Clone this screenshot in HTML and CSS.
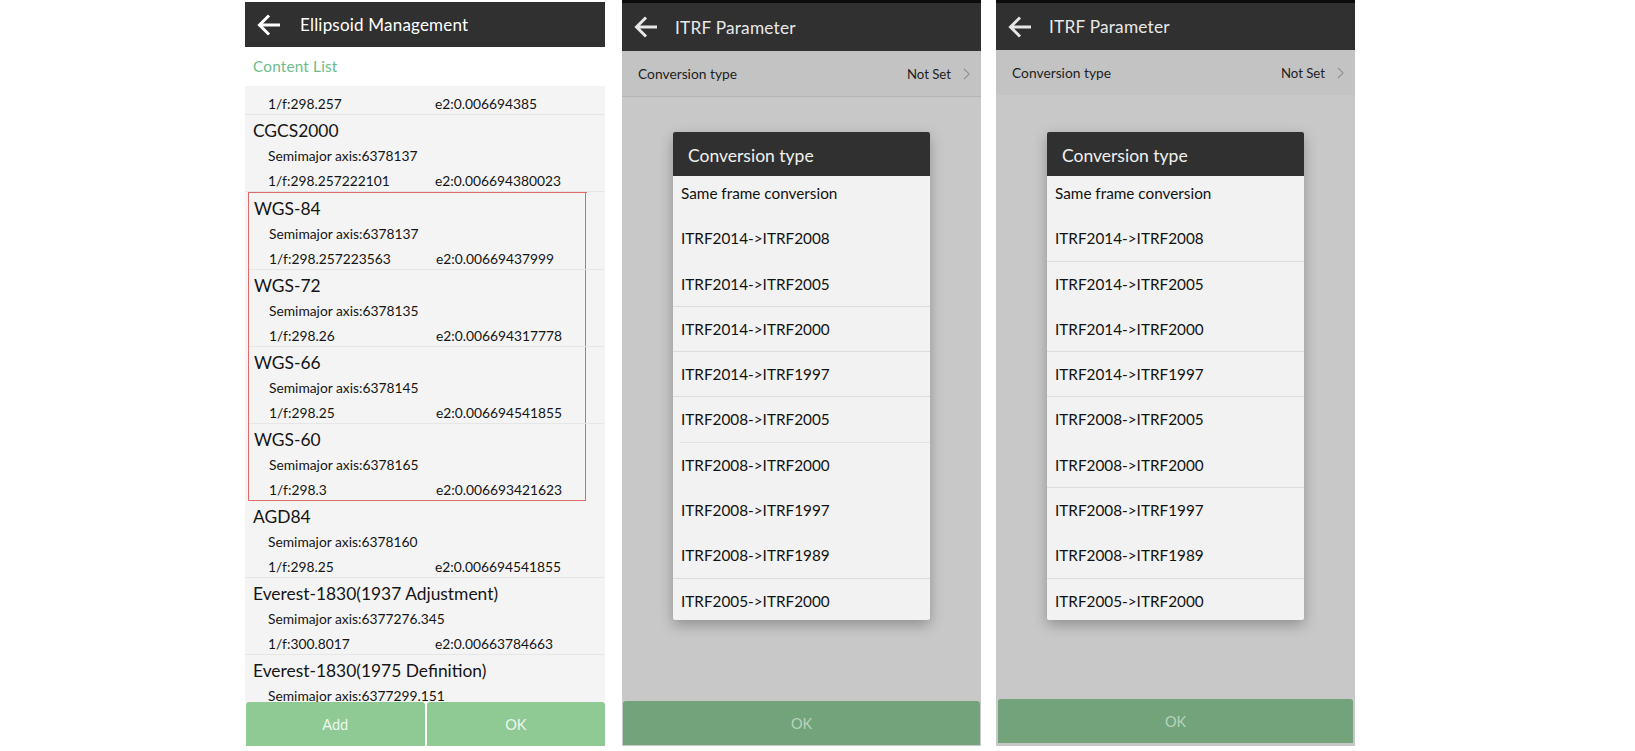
FILE: index.html
```html
<!DOCTYPE html>
<html lang="en">

<head>
    <meta charset="UTF-8">
    <meta name="viewport" content="width=device-width, initial-scale=1.0">
    <title>Ellipsoid / ITRF</title>
    <link rel="stylesheet" href="styles.css">
</head>

<body>
    <div class="screens">

        <!-- screen 1 : ellipsoid list -->
        <div class="phone phone-list">
            <div class="bar">
                <svg class="back" viewBox="0 0 26 24"><path d="M24 12H4M13 2.5L3.5 12l9.5 9.5" /></svg>
                <span class="bar-title">Ellipsoid Management</span>
            </div>
            <div class="label">Content List</div>
            <div class="list">
                <ul class="list-inner">
                    <li class="ell">
                        <div class="ell-name">Krassovsky</div>
                        <div class="ell-row">Semimajor axis:6378245</div>
                        <div class="ell-row"><span class="col">1/f:298.257</span><span>e2:0.006694385</span></div>
                    </li>
                    <li class="ell">
                        <div class="ell-name">CGCS2000</div>
                        <div class="ell-row">Semimajor axis:6378137</div>
                        <div class="ell-row"><span class="col">1/f:298.257222101</span><span>e2:0.006694380023</span></div>
                    </li>
                    <li class="marked">
                        <div class="ell">
                            <div class="ell-name">WGS-84</div>
                            <div class="ell-row">Semimajor axis:6378137</div>
                            <div class="ell-row"><span class="col">1/f:298.257223563</span><span>e2:0.00669437999</span></div>
                        </div>
                        <div class="ell">
                            <div class="ell-name">WGS-72</div>
                            <div class="ell-row">Semimajor axis:6378135</div>
                            <div class="ell-row"><span class="col">1/f:298.26</span><span>e2:0.006694317778</span></div>
                        </div>
                        <div class="ell">
                            <div class="ell-name">WGS-66</div>
                            <div class="ell-row">Semimajor axis:6378145</div>
                            <div class="ell-row"><span class="col">1/f:298.25</span><span>e2:0.006694541855</span></div>
                        </div>
                        <div class="ell">
                            <div class="ell-name">WGS-60</div>
                            <div class="ell-row">Semimajor axis:6378165</div>
                            <div class="ell-row"><span class="col">1/f:298.3</span><span>e2:0.006693421623</span></div>
                        </div>
                    </li>
                    <li class="ell">
                        <div class="ell-name">AGD84</div>
                        <div class="ell-row">Semimajor axis:6378160</div>
                        <div class="ell-row"><span class="col">1/f:298.25</span><span>e2:0.006694541855</span></div>
                    </li>
                    <li class="ell">
                        <div class="ell-name">Everest-1830(1937 Adjustment)</div>
                        <div class="ell-row">Semimajor axis:6377276.345</div>
                        <div class="ell-row"><span class="col">1/f:300.8017</span><span>e2:0.00663784663</span></div>
                    </li>
                    <li class="ell">
                        <div class="ell-name">Everest-1830(1975 Definition)</div>
                        <div class="ell-row">Semimajor axis:6377299.151</div>
                    </li>
                </ul>
            </div>
            <div class="buttons">
                <div class="btn">Add</div>
                <div class="btn">OK</div>
            </div>
        </div>

        <!-- screen 2 : itrf dialog -->
        <div class="phone phone-dim">
            <div class="bar bar-tall">
                <svg class="back" viewBox="0 0 26 24"><path d="M24 12H4M13 2.5L3.5 12l9.5 9.5" /></svg>
                <span class="bar-title">ITRF Parameter</span>
            </div>
            <div class="setting">
                <span>Conversion type</span>
                <span class="value">Not Set <svg class="chev" viewBox="0 0 8 14"><path d="M1 1l6 6-6 6" /></svg></span>
            </div>
            <div class="dim-body">
                <div class="dialog">
                    <div class="dialog-head">Conversion type</div>
                    <div class="dialog-list">
                        <ul class="options">
                            <li>Same frame conversion</li>
                            <li>ITRF2014-&gt;ITRF2008</li>
                            <li class="sep">ITRF2014-&gt;ITRF2005</li>
                            <li class="sep">ITRF2014-&gt;ITRF2000</li>
                            <li class="sep">ITRF2014-&gt;ITRF1997</li>
                            <li class="sep-inset">ITRF2008-&gt;ITRF2005</li>
                            <li>ITRF2008-&gt;ITRF2000</li>
                            <li>ITRF2008-&gt;ITRF1997</li>
                            <li class="sep">ITRF2008-&gt;ITRF1989</li>
                            <li>ITRF2005-&gt;ITRF2000</li>
                        </ul>
                    </div>
                </div>
            </div>
            <div class="ok">OK</div>
        </div>

        <!-- screen 3 : same dialog, other divider state -->
        <div class="phone phone-dim phone-last">
            <div class="bar bar-mid">
                <svg class="back" viewBox="0 0 26 24"><path d="M24 12H4M13 2.5L3.5 12l9.5 9.5" /></svg>
                <span class="bar-title">ITRF Parameter</span>
            </div>
            <div class="setting setting-flat">
                <span>Conversion type</span>
                <span class="value">Not Set <svg class="chev" viewBox="0 0 8 14"><path d="M1 1l6 6-6 6" /></svg></span>
            </div>
            <div class="dim-body">
                <div class="dialog">
                    <div class="dialog-head">Conversion type</div>
                    <div class="dialog-list">
                        <ul class="options">
                            <li>Same frame conversion</li>
                            <li class="sep">ITRF2014-&gt;ITRF2008</li>
                            <li>ITRF2014-&gt;ITRF2005</li>
                            <li class="sep">ITRF2014-&gt;ITRF2000</li>
                            <li class="sep">ITRF2014-&gt;ITRF1997</li>
                            <li>ITRF2008-&gt;ITRF2005</li>
                            <li class="sep">ITRF2008-&gt;ITRF2000</li>
                            <li>ITRF2008-&gt;ITRF1997</li>
                            <li class="sep">ITRF2008-&gt;ITRF1989</li>
                            <li>ITRF2005-&gt;ITRF2000</li>
                        </ul>
                    </div>
                </div>
            </div>
            <div class="ok ok-wide">OK</div>
        </div>

    </div>
</body>

</html>
```

FILE: styles.css
```css
* {
    margin: 0;
    padding: 0;
    box-sizing: border-box;
    list-style: none;
}

body {
    background-color: #fff;
    font-family: "Lato", "Open Sans", sans-serif;
    color: #1a1a1a;
    height: 751px;
    overflow: hidden;
}

.screens {
    display: flex;
    align-items: flex-start;
    padding-left: 245px;
}

.phone {
    width: 360px;
    height: 744px;
    margin-top: 2px;
    display: flex;
    flex-direction: column;
    overflow: hidden;
}

/* top bar */
.bar {
    height: 45px;
    flex-shrink: 0;
    background-color: #303030;
    display: flex;
    align-items: center;
    padding-left: 11px;
    color: #fff;
}

.bar-tall {
    height: 51px;
    border-top: 3px solid #0c0c0c;
}

.bar-mid {
    height: 50px;
    border-top: 3px solid #0c0c0c;
}

.back {
    width: 26px;
    height: 24px;
    fill: none;
    stroke: #fff;
    stroke-width: 3;
    margin-right: 18px;
}

.phone-dim .back {
    stroke: #e6e6e6;
    margin-right: 16px;
}

.bar-title {
    font-size: 17px;
    letter-spacing: 0.2px;
}

.phone-dim .bar-title {
    color: #e8e8e8;
    font-size: 17.3px;
}

/* screen 1 */
.label {
    height: 39px;
    flex-shrink: 0;
    padding-left: 8px;
    padding-top: 10px;
    font-size: 15.3px;
    line-height: 18px;
    color: #6cbd87;
    letter-spacing: 0.2px;
}

.list {
    flex: 1;
    background-color: #f4f4f4;
    overflow: hidden;
}

.list-inner {
    margin-top: -48px;
}

.ell {
    height: 77px;
    border-bottom: 1px solid #e6e6e6;
    padding-left: 8px;
    color: #151515;
}

.ell-name {
    height: 29px;
    padding-top: 5px;
    font-size: 17.4px;
    line-height: 22px;
}

.ell-row {
    height: 24.5px;
    padding-left: 15px;
    font-size: 13.8px;
    line-height: 24.5px;
    display: flex;
}

.col {
    width: 167px;
}

.marked {
    margin: 1px 19px 0 3px;
    border: 1.5px solid #e06a6a;
    border-top: none;
    position: relative;
}

.marked::before {
    content: "";
    position: absolute;
    left: -1.5px;
    right: -1.5px;
    top: -1px;
    border-top: 1.5px solid #e06a6a;
}

.marked .ell {
    padding-left: 5px;
    margin-right: -19px;
}

.marked .ell:last-child {
    border-bottom: none;
    height: 76px;
}

.buttons {
    height: 44px;
    flex-shrink: 0;
    display: flex;
    gap: 2px;
    padding-left: 1px;
}

.btn {
    flex: 1;
    background-color: #8fc993;
    color: #eef7ef;
    font-size: 14.5px;
    display: flex;
    align-items: center;
    justify-content: center;
    border-radius: 3px 3px 0 0;
}

/* screens 2 and 3 */
.phone-dim {
    width: 359px;
    margin-top: 0;
    height: 746px;
    margin-left: 17px;
    background-color: #c8c8c8;
}

.phone-last {
    margin-left: 15px;
}

.setting {
    height: 46px;
    flex-shrink: 0;
    background-color: #c3c3c3;
    border-bottom: 1px solid #b4b4b4;
    display: flex;
    align-items: center;
    justify-content: space-between;
    padding: 0 11px 0 16px;
    font-size: 13.8px;
    color: #1e1e1e;
}

.setting-flat {
    height: 45px;
    border-bottom: none;
}

.value {
    display: flex;
    align-items: center;
    gap: 12px;
    font-size: 13.2px;
}

.chev {
    width: 7px;
    height: 12px;
    fill: none;
    stroke: #8a8a8a;
    stroke-width: 1.2;
}

.dim-body {
    flex: 1;
    display: flex;
    justify-content: center;
    padding-top: 35px;
}

.phone-last .dim-body {
    padding-top: 37px;
}

.dialog {
    width: 257px;
    height: 488px;
    background-color: #f2f2f2;
    border-radius: 2px;
    box-shadow: 0 5px 14px rgba(0, 0, 0, 0.28);
    overflow: hidden;
    display: flex;
    flex-direction: column;
}

.dialog-head {
    height: 44px;
    flex-shrink: 0;
    background-color: #303030;
    color: #f0f0f0;
    font-size: 17.5px;
    line-height: 22px;
    padding-left: 15px;
    padding-top: 13px;
}

.dialog-list {
    flex: 1;
    overflow: hidden;
}

.options {
    margin-top: -5px;
}

.options li {
    height: 45.3px;
    line-height: 45px;
    padding-left: 8px;
    font-size: 15.3px;
    color: #111;
    border-bottom: 1px solid transparent;
}

.options .sep {
    border-bottom-color: #dcdcdc;
}

.options .sep-inset {
    border-bottom: none;
    background-image: linear-gradient(#e2e2e2, #e2e2e2);
    background-size: calc(100% - 7px) 1px;
    background-position: right bottom;
    background-repeat: no-repeat;
}

.ok {
    height: 44px;
    flex-shrink: 0;
    margin: 0 1px 1px;
    background-color: #72a37a;
    color: #b9d3bd;
    font-size: 14.5px;
    display: flex;
    align-items: center;
    justify-content: center;
    border-radius: 3px 3px 0 0;
}

.ok-wide {
    margin: 0 2px 3px;
}
```
